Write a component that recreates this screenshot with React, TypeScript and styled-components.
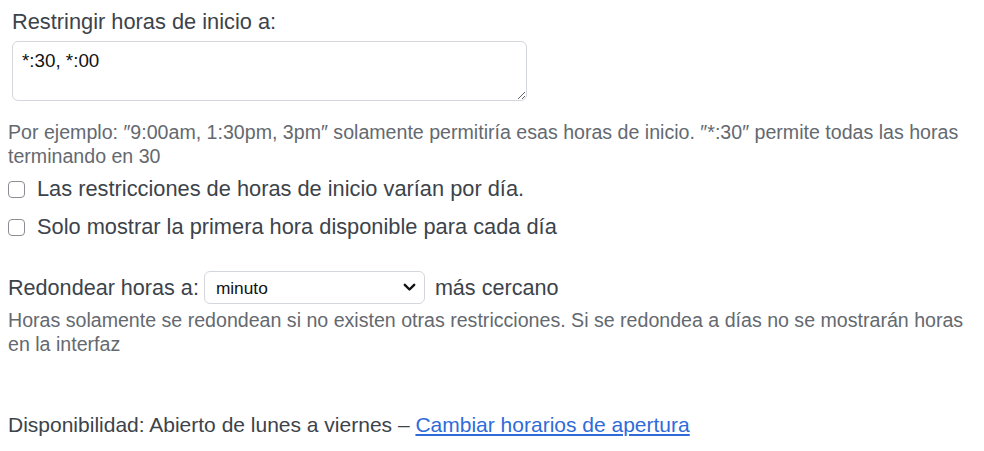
import React, { useState } from 'react'
import styled, { createGlobalStyle } from 'styled-components'

const GlobalStyle = createGlobalStyle`
  body {
    margin: 0;
    background: #fff;
    font-family: 'Liberation Sans', Arial, sans-serif;
    color: #3c434a;
  }
`

const Page = styled.div`
  padding: 8px 8px 0 8px;
  width: 968px;
`

const FieldGroup = styled.div`
  padding-left: 4px;
`

const FieldLabel = styled.label`
  display: block;
  font-size: 21.8px;
  line-height: 28px;
  margin-bottom: 5px;
`

const TimesArea = styled.textarea`
  display: block;
  box-sizing: border-box;
  width: 515px;
  height: 60px;
  padding: 7px 9px;
  border: 1px solid #d3d6da;
  border-radius: 6px;
  font-family: 'Liberation Sans', Arial, sans-serif;
  font-size: 18.8px;
  line-height: 23px;
  color: #111;
  background: #fff;
  outline: none;
`

const HelpText = styled.p<{ gap?: number }>`
  margin: ${p => p.gap ?? 0}px 0 0 0;
  max-width: 962px;
  font-size: 19.6px;
  line-height: 24px;
  color: #646970;
`

const CheckList = styled.div`
  display: flex;
  flex-direction: column;
  gap: 10px;
  margin-top: 7px;
`

const CheckRow = styled.label`
  display: flex;
  align-items: center;
  gap: 12px;
  font-size: 21.8px;
  line-height: 28px;
`

const Box = styled.input`
  appearance: none;
  margin: 0;
  width: 17px;
  height: 17px;
  border: 1.5px solid #8a8d92;
  border-radius: 4px;
  background: #fff;
  flex: none;
`

const RoundRow = styled.div`
  display: flex;
  align-items: center;
  margin-top: 30px;
  font-size: 21.6px;
  line-height: 28px;
`

const SelectWrap = styled.div`
  position: relative;
  width: 221px;
  height: 33px;
  margin: 0 10px 0 5px;
`

const Select = styled.select`
  appearance: none;
  box-sizing: border-box;
  width: 100%;
  height: 100%;
  padding: 0 32px 0 11px;
  border: 1px solid #d3d6da;
  border-radius: 6px;
  background: #fff;
  font-family: 'Liberation Sans', Arial, sans-serif;
  font-size: 17.3px;
  color: #111;
  outline: none;
`

const Chevron = styled.svg`
  position: absolute;
  right: 9px;
  top: 12px;
  pointer-events: none;
`

const Availability = styled.div`
  margin-top: 55px;
  font-size: 21px;
  line-height: 28px;
`

const Link = styled.a`
  color: #2f6bd9;
  text-decoration: underline;
  text-underline-offset: 2px;
`

export default function App() {
  const [times, setTimes] = useState('*:30, *:00')
  const [round, setRound] = useState('minuto')

  return (
    <>
      <GlobalStyle />
      <Page>
        <FieldGroup>
          <FieldLabel htmlFor="start-times">Restringir horas de inicio a:</FieldLabel>
          <TimesArea id="start-times" value={times} onChange={e => setTimes(e.target.value)} />
        </FieldGroup>
        <HelpText gap={19}>
          Por ejemplo: ″9:00am, 1:30pm, 3pm″ solamente permitiría esas horas de inicio. ″*:30″ permite todas las horas
          terminando en 30
        </HelpText>

        <CheckList>
          <CheckRow>
            <Box type="checkbox" />
            Las restricciones de horas de inicio varían por día.
          </CheckRow>
          <CheckRow>
            <Box type="checkbox" />
            Solo mostrar la primera hora disponible para cada día
          </CheckRow>
        </CheckList>

        <RoundRow>
          <span>Redondear horas a:</span>
          <SelectWrap>
            <Select value={round} onChange={e => setRound(e.target.value)}>
              <option value="minuto">minuto</option>
              <option value="hora">hora</option>
              <option value="día">día</option>
            </Select>
            <Chevron width="13" height="9" viewBox="0 0 13 9">
              <path d="M1.8 1.8 L6.5 6.5 L11.2 1.8" fill="none" stroke="#111" strokeWidth="2.4" strokeLinecap="round" strokeLinejoin="round" />
            </Chevron>
          </SelectWrap>
          <span>más cercano</span>
        </RoundRow>
        <HelpText gap={4}>
          Horas solamente se redondean si no existen otras restricciones. Si se redondea a días no se mostrarán horas
          en la interfaz
        </HelpText>

        <Availability>
          Disponibilidad: Abierto de lunes a viernes – <Link href="#">Cambiar horarios de apertura</Link>
        </Availability>
      </Page>
    </>
  )
}
